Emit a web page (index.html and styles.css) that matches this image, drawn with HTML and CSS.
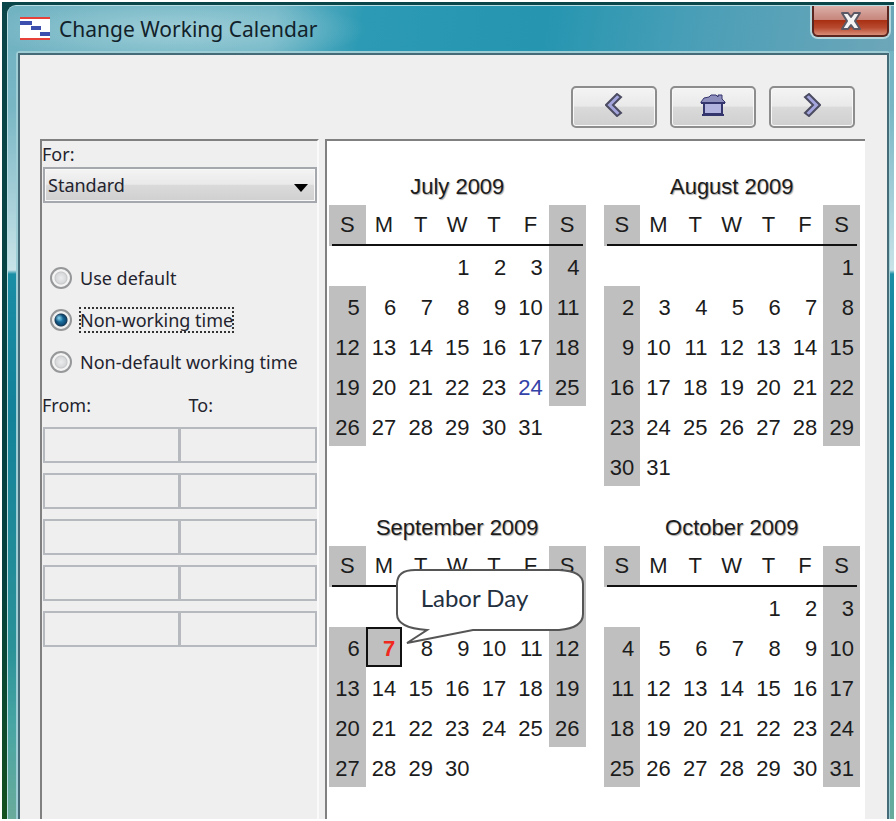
FILE: index.html
```html
<!DOCTYPE html>
<html lang="en">
<head>
    <meta charset="UTF-8">
    <meta name="viewport" content="width=device-width, initial-scale=1.0">
    <title>Change Working Calendar</title>
    <link rel="stylesheet" href="styles.css">
</head>
<body>
    <div class="desktop">
        <div class="window">
            <header class="titlebar">
                <svg class="app-icon" width="30" height="23" viewBox="0 0 30 23" aria-hidden="true">
                    <rect width="30" height="23" fill="#fff"/>
                    <path d="M0 1h30M0 22h30" stroke="#e8413a" stroke-width="2"/>
                    <path d="M0 6h12M11 11h10M20 17h10" stroke="#3c4fae" stroke-width="4"/>
                </svg>
                <h1>Change Working Calendar</h1>
                <button class="close" type="button" aria-label="Close">
                    <svg width="22" height="20" viewBox="0 0 22 20" aria-hidden="true">
                        <path d="M2 2h6l3 4 3-4h6l-5 8 5 8h-6l-3-4-3 4H2l5-8z" fill="#f4f4f4" stroke="#5b5965" stroke-width="2" stroke-linejoin="round"/>
                    </svg>
                </button>
            </header>
            <div class="frame">
                <main class="content">
                    <nav class="toolbar">
                        <button class="tool" type="button" aria-label="Previous">
                            <svg width="18" height="24" viewBox="0 0 18 24" aria-hidden="true">
                                <path d="M12 1l4 3-8 8 8 8-4 3L1 12z" fill="#a3a5dc" stroke="#4b4b62" stroke-width="2"/>
                            </svg>
                        </button>
                        <button class="tool" type="button" aria-label="Today">
                            <svg width="26" height="22" viewBox="0 0 26 22" aria-hidden="true">
                                <path d="M4 9h18v11H4z" fill="#b3b3e0" stroke="#35356e" stroke-width="2"/>
                                <path d="M1 8l3-4 5-1 2-2h5l2 2V1h4v4l3 3v1H1z" fill="#8f8fbd" stroke="#35356e" stroke-width="1"/>
                                <path d="M1 9h24M2 21h22" stroke="#35356e" stroke-width="2"/>
                            </svg>
                        </button>
                        <button class="tool" type="button" aria-label="Next">
                            <svg width="18" height="24" viewBox="0 0 18 24" aria-hidden="true">
                                <path d="M6 1L2 4l8 8-8 8 4 3 11-11z" fill="#a3a5dc" stroke="#4b4b62" stroke-width="2"/>
                            </svg>
                        </button>
                    </nav>
                    <div class="columns">
                        <form class="options">
                            <label class="caption" for="calendar">For:</label>
                            <div class="select-box">
                                <select id="calendar">
                                    <option>Standard</option>
                                </select>
                                <svg class="arrow" width="14" height="8" viewBox="0 0 14 8" aria-hidden="true">
                                    <path d="M0 0h14L7 8z" fill="#000"/>
                                </svg>
                            </div>
                            <div class="radios">
                                <label><input type="radio" name="time"><span>Use default</span></label>
                                <label><input type="radio" name="time" checked><span>Non-working time</span></label>
                                <label><input type="radio" name="time"><span>Non-default working time</span></label>
                            </div>
                            <div class="range-head">
                                <span id="from">From:</span>
                                <span id="to">To:</span>
                            </div>
                            <div class="ranges">
                                <input type="text" aria-labelledby="from" disabled><input type="text" aria-labelledby="to" disabled>
                                <input type="text" aria-labelledby="from" disabled><input type="text" aria-labelledby="to" disabled>
                                <input type="text" aria-labelledby="from" disabled><input type="text" aria-labelledby="to" disabled>
                                <input type="text" aria-labelledby="from" disabled><input type="text" aria-labelledby="to" disabled>
                                <input type="text" aria-labelledby="from" disabled><input type="text" aria-labelledby="to" disabled>
                            </div>
                        </form>
                        <section class="months" id="months"></section>
                    </div>
                </main>
            </div>
        </div>
    </div>
    <template id="callout">
        <span class="callout">
            <svg width="190" height="76" viewBox="0 0 190 76" aria-hidden="true">
                <path d="M20 2H164Q188 3 188 16V46Q188 60 164 62H78L12 75L32 62Q2 60 2 46V16Q2 2 20 2Z" fill="#fff" stroke="#555" stroke-width="2"/>
            </svg>
            <span class="callout-text">Labor Day</span>
        </span>
    </template>
    <script>
        const year = 2009;
        const names = { 6: 'July', 7: 'August', 8: 'September', 9: 'October' };
        const today = '6-24';
        const holiday = '8-7';

        function buildMonth(month) {
            const table = document.createElement('table');
            table.className = 'month';
            table.createCaption().textContent = names[month] + ' ' + year;

            const head = table.createTHead().insertRow();
            for (const day of 'SMTWTFS') {
                const th = document.createElement('th');
                th.scope = 'col';
                th.textContent = day;
                head.appendChild(th);
            }

            const body = table.createTBody();
            const first = new Date(year, month, 1).getDay();
            const count = new Date(year, month + 1, 0).getDate();
            let row;
            for (let i = 0; i < first + count; i++) {
                if (i % 7 === 0) row = body.insertRow();
                const cell = row.insertCell();
                const day = i - first + 1;
                if (day < 1) continue;
                if (i % 7 === 0 || i % 7 === 6) cell.className = 'weekend';
                // the callout lies over the first week of September
                if (month === 8 && day < 6) continue;
                cell.textContent = day;
                if (month + '-' + day === today) cell.className = 'today';
                if (month + '-' + day === holiday) {
                    cell.className = 'holiday';
                    cell.appendChild(document.getElementById('callout').content.cloneNode(true));
                }
            }
            return table;
        }

        for (const month of [6, 7, 8, 9]) {
            document.getElementById('months').appendChild(buildMonth(month));
        }
    </script>
</body>
</html>
```
FILE: styles.css
```css
* {
    box-sizing: border-box;
}
body {
    margin: 0;
    padding: 2px;
    min-height: 100vh;
    display: flex;
    background: #fff;
    color: #23232e;
    font-family: "Noto Sans", sans-serif;
    font-size: 18px;
}
.desktop {
    flex: 1;
    display: flex;
    padding: 3px 0 0 5px;
    background: linear-gradient(#0a4549, #05403f 70%, #14501f);
}
.window {
    flex: 1;
    display: flex;
    flex-direction: column;
    border: 1px solid #b9dde3;
    border-right: none;
    border-bottom: none;
    border-radius: 9px 0 0 0;
    background: linear-gradient(#6fb2c2, #78b6c4 100px, #c9e3e8 264px, #1a8ea5 268px, #128199 400px, #2a9198 640px, #48a5a3 720px, #6aab9b);
    overflow: hidden;
}
.titlebar {
    display: flex;
    align-items: center;
    gap: 9px;
    height: 45px;
    padding: 0 5px 0 12px;
    background:
        radial-gradient(ellipse 190px 34px at 170px 24px, rgba(190, 224, 230, 0.6), transparent),
        linear-gradient(100deg, #72b3c2 0, #6fb5c5 30%, #2c9ab4 40%, #2595b0 60%, #4b9fb7 78%, #6da6b9);
}
.titlebar h1 {
    flex: 1;
    margin: 0;
    font-size: 21px;
    font-weight: 400;
    line-height: 30px;
    color: #12222b;
}
.close {
    align-self: flex-start;
    display: flex;
    align-items: center;
    justify-content: center;
    width: 77px;
    height: 31px;
    padding: 0;
    border: 2px solid #5c2620;
    border-top: none;
    border-radius: 0 0 6px 6px;
    background: linear-gradient(#dcb0a9, #c6857b 48%, #a93013 50%, #b84a30 75%, #d98d77);
    box-shadow: 0 0 0 2px #b4d6dd;
}
.frame {
    flex: 1;
    display: flex;
    margin: 0 4px 0 8px;
    border: 2px solid #9fcdd6;
    border-width: 2px 1px 0 2px;
    border-radius: 4px 4px 0 0;
}
.content {
    flex: 1;
    display: flex;
    flex-direction: column;
    border: 2px solid #456b78;
    border-bottom: none;
    background: #efefef;
}
.toolbar {
    display: flex;
    justify-content: flex-end;
    gap: 13px;
    padding: 31px 32px 11px;
}
.tool {
    display: flex;
    align-items: center;
    justify-content: center;
    width: 86px;
    height: 42px;
    padding: 0 0 4px;
    border: 2px solid #8d8d8d;
    border-radius: 5px;
    background: linear-gradient(#f4f4f4, #e9e9e9 48%, #dadada 50%, #cfcfcf);
    box-shadow: inset 0 0 0 1px #f8f8f8;
}
.columns {
    flex: 1;
    display: grid;
    grid-template-columns: 279px 1fr;
    gap: 6px;
    padding: 0 22px 0 20px;
}
.options {
    border: 2px solid #808080;
    border-right-color: #fafafa;
    border-bottom: none;
}
.caption {
    display: block;
    line-height: 26px;
}
.select-box {
    position: relative;
    margin: 0 0 54px 1px;
}
.select-box select {
    display: block;
    width: 100%;
    height: 36px;
    padding: 0 3px;
    appearance: none;
    border: 2px solid #a5a8ad;
    border-radius: 0;
    background: linear-gradient(#f4f4f4, #e9e9e9 48%, #dadada 50%, #d0d0d0);
    box-shadow: inset 0 0 0 1px #f8f8f8;
    color: inherit;
    font: inherit;
}
.select-box .arrow {
    position: absolute;
    top: 17px;
    right: 9px;
    pointer-events: none;
}
.radios label {
    display: flex;
    align-items: center;
    gap: 8px;
    height: 42px;
    padding-left: 8px;
}
.radios input {
    appearance: none;
    width: 22px;
    height: 22px;
    margin: 0;
    border: 2px solid #969799;
    border-radius: 50%;
    background: radial-gradient(circle, #eceded 0, #d6d8da 5px, #c6c8ca 6px, #f4f4f4 7px);
}
.radios input:checked {
    background: radial-gradient(circle at 7px 7px, #8fd8f2 0, transparent 4px), radial-gradient(circle, #2385b5 0, #0f4a75 5px, #1b3b55 6px, #f0f0f0 7px);
}
.radios span {
    line-height: 24px;
}
.radios input:checked + span {
    outline: 2px dotted #333;
    outline-offset: -1px;
}
.range-head {
    display: grid;
    grid-template-columns: 1fr 1fr;
    margin: 9px 0;
    line-height: 26px;
}
.range-head #to {
    padding-left: 9px;
}
.ranges {
    display: grid;
    grid-template-columns: 1fr 1fr;
    row-gap: 10px;
    margin-left: 1px;
}
.ranges input {
    width: 100%;
    height: 36px;
    border: 2px solid #b6b9bd;
    background: #efefef;
}
.ranges input:nth-child(even) {
    border-left-width: 1px;
}
.months {
    display: grid;
    grid-template-columns: 1fr 1fr;
    align-content: start;
    align-items: start;
    gap: 24px 18px;
    padding: 28px 5px 0 2px;
    border: 2px solid #808080;
    border-right: none;
    border-bottom: none;
    background: #fff;
    color: #1c1c1c;
    font-family: "Liberation Sans", Arial, sans-serif;
    font-size: 22px;
}
.month {
    width: 100%;
    table-layout: fixed;
    border-spacing: 0;
}
.month caption {
    line-height: 36px;
    text-shadow: 1px 1px 1px #aaa;
}
.month th {
    padding: 1px 0 0;
    font-weight: 400;
    line-height: 38px;
}
/* rule under the weekday letters, a little shorter than the table */
.month th::after {
    content: "";
    display: block;
    height: 2px;
    background: #111;
}
.month th:first-child::after {
    margin-left: 3px;
}
.month th:last-child::after {
    margin-right: 3px;
}
.month th:first-child,
.month th:last-child,
.month .weekend,
.month .holiday {
    background: #bfbfbf;
}
.month td {
    height: 40px;
    padding: 3px 6px 0 0;
    text-align: right;
}
.month .today {
    color: #3443a8;
}
.month .holiday {
    position: relative;
    padding-right: 5px;
    border: 2px solid #111;
    color: #f0281e;
    font-weight: 700;
}
.callout {
    position: absolute;
    top: -61px;
    left: 27px;
    z-index: 1;
    color: #23303f;
    font-family: Lato, sans-serif;
    font-weight: 400;
    text-align: left;
}
.callout svg {
    display: block;
}
.callout-text {
    position: absolute;
    top: 15px;
    left: 26px;
    font-size: 24px;
    line-height: 30px;
    white-space: nowrap;
}
```
